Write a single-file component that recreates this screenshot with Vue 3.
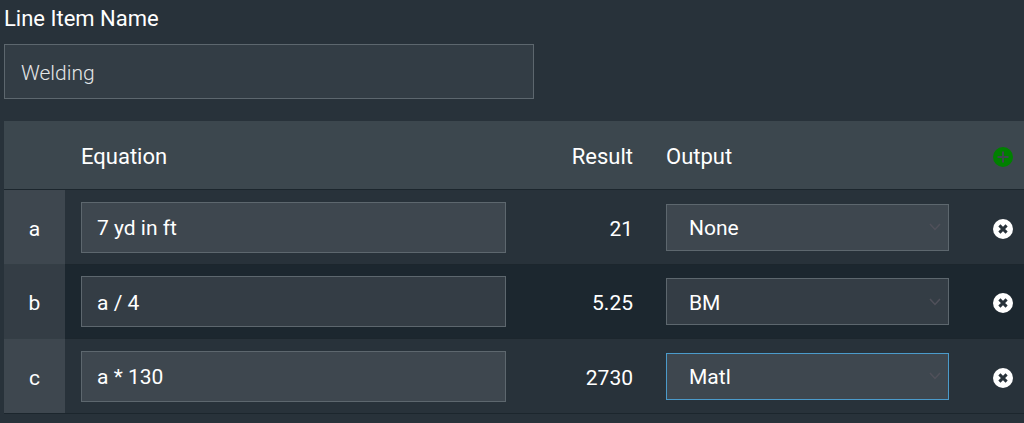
<script setup>
import { ref } from 'vue'

const name = ref('Welding')
const outputs = ['None', 'BM', 'Matl']
const rows = ref([
  { id: 'a', equation: '7 yd in ft', result: '21', output: 'None' },
  { id: 'b', equation: 'a / 4', result: '5.25', output: 'BM' },
  { id: 'c', equation: 'a * 130', result: '2730', output: 'Matl', active: true }
])
</script>

<template>
  <main class="page">
    <label class="title" for="item-name">Line Item Name</label>
    <input id="item-name" v-model="name" class="field name" type="text" />
    <table class="grid">
      <colgroup>
        <col class="col-id" />
        <col />
        <col class="col-result" />
        <col class="col-output" />
        <col class="col-action" />
      </colgroup>
      <thead>
        <tr>
          <th></th>
          <th>Equation</th>
          <th class="num">Result</th>
          <th>Output</th>
          <th class="action">
            <button type="button" class="icon add" aria-label="Add row">
              <svg viewBox="0 0 20 20" aria-hidden="true">
                <path fill="currentColor" fill-rule="evenodd" d="M10 0a10 10 0 1 0 0 20a10 10 0 1 0 0-20zM9 4.500h2v4.500h4.500v2h-4.500v4.500h-2v-4.500h-4.500v-2h4.500z" />
              </svg>
            </button>
          </th>
        </tr>
      </thead>
      <tbody>
        <tr v-for="row in rows" :key="row.id">
          <th scope="row" class="id">{{ row.id }}</th>
          <td>
            <input v-model="row.equation" class="field" type="text" :aria-label="'Equation ' + row.id" />
          </td>
          <td class="num">{{ row.result }}</td>
          <td>
            <div class="pick">
              <select v-model="row.output" :class="{ active: row.active }" :aria-label="'Output ' + row.id">
                <option v-for="o in outputs" :key="o">{{ o }}</option>
              </select>
              <svg class="chevron" viewBox="0 0 12 8" aria-hidden="true">
                <path d="M1 1l5 5.500l5-5.500" fill="none" stroke="currentColor" stroke-width="1.500" />
              </svg>
            </div>
          </td>
          <td class="action">
            <button type="button" class="icon" :aria-label="'Remove row ' + row.id">
              <svg viewBox="0 0 20 20" aria-hidden="true">
                <circle cx="10" cy="10" r="10" fill="currentColor" />
                <path class="cross" d="M6.400 6.400l7.200 7.200M13.600 6.400l-7.200 7.200" fill="none" stroke-width="3" />
              </svg>
            </button>
          </td>
        </tr>
      </tbody>
    </table>
  </main>
</template>

<style>
body {
  background: #28323a;
}
</style>

<style scoped>
.page {
  padding: 5px 0 8px 4px;
  color: #fff;
  font: 22px/28px Roboto, sans-serif;
}
.title {
  display: block;
  margin-bottom: 11px;
}
.field,
select {
  display: block;
  box-sizing: border-box;
  width: 100%;
  margin: 0;
  border: 1px solid #5d676e;
  border-radius: 0;
  background: #3e474f;
  color: #fff;
  font: inherit;
  outline: none;
}
.field {
  height: 51px;
  padding: 2px 15px 0;
}
.name {
  width: 52%;
  height: 55px;
  margin-bottom: 22px;
  padding: 2px 16px 0;
  background: #333d45;
  color: #e4e6e7;
  font-size: 21px;
  font-weight: 300;
}
.grid {
  width: 100%;
  table-layout: fixed;
  border-collapse: separate;
  border-spacing: 0;
}
.col-id {
  width: 61px;
}
.col-result {
  width: 128px;
}
.col-output {
  width: 315px;
}
.col-action {
  width: 59px;
}
th,
td {
  box-sizing: border-box;
  height: 75px;
  padding: 0 16px;
  border-bottom: 1px solid #1c262d;
  font-weight: 400;
  text-align: left;
  vertical-align: middle;
}
thead th {
  height: 69px;
  padding-top: 3px;
  background: #3c474e;
}
tbody {
  font-size: 21px;
}
tbody tr:nth-child(even) {
  background: #1c272f;
}
tbody tr:nth-child(even) > * {
  height: 74px;
}
tbody tr:nth-child(even) .field,
tbody tr:nth-child(even) select {
  background-color: #343d45;
}
.id {
  padding: 0;
  background: #3e474f;
  border-bottom-color: #343e45;
  text-align: center;
}
tbody tr:nth-child(even) .id {
  background: #343d45;
}
tbody tr:last-child .id {
  border-bottom-color: #1c262d;
}
.num {
  padding-right: 17px;
  text-align: right;
}
.id,
.num,
.action {
  padding-top: 3px;
}
.pick {
  display: grid;
  align-items: center;
}
.pick > * {
  grid-area: 1 / 1;
}
select {
  height: 47px;
  padding: 2px 40px 0 22px;
  appearance: none;
}
select.active {
  border-color: #4b9bcb;
}
.chevron {
  width: 12px;
  height: 8px;
  margin-right: 8px;
  justify-self: end;
  color: #50505a;
  pointer-events: none;
}
.action {
  padding-left: 0;
  padding-right: 11px;
}
.icon {
  display: block;
  width: 20px;
  height: 20px;
  margin-left: auto;
  padding: 0;
  border: 0;
  background: none;
  color: #fff;
}
.icon svg {
  display: block;
}
.add {
  color: #008000;
}
.cross {
  stroke: #28323a;
}
</style>
